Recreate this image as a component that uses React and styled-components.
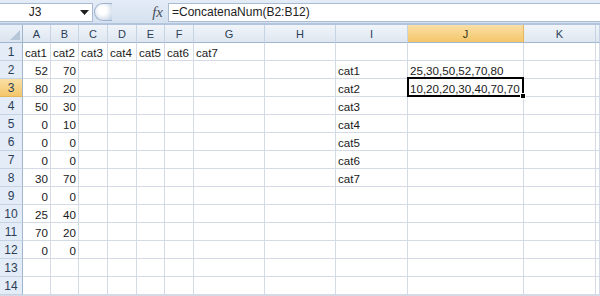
import React from "react";
import styled, { createGlobalStyle } from "styled-components";

const GlobalStyle = createGlobalStyle`
  html, body {
    margin: 0;
    padding: 0;
    background: #ffffff;
  }
  body {
    font-family: "Liberation Sans", Arial, sans-serif;
  }
`;

const columns = [
  { id: "A", width: 28 },
  { id: "B", width: 28 },
  { id: "C", width: 29 },
  { id: "D", width: 29 },
  { id: "E", width: 28 },
  { id: "F", width: 29 },
  { id: "G", width: 71 },
  { id: "H", width: 71 },
  { id: "I", width: 72 },
  { id: "J", width: 116 },
  { id: "K", width: 72 },
];

const numbers = [
  [52, 70],
  [80, 20],
  [50, 30],
  [0, 10],
  [0, 0],
  [0, 0],
  [30, 70],
  [0, 0],
  [25, 40],
  [70, 20],
  [0, 0],
];

const buildRows = () => {
  const rows = [];
  for (let r = 1; r <= 14; r++) {
    const cells = {};
    if (r === 1) {
      ["A", "B", "C", "D", "E", "F", "G"].forEach((c, i) => {
        cells[c] = { text: `cat${i + 1}` };
      });
    }
    if (r >= 2 && r <= 12) {
      cells.A = { text: String(numbers[r - 2][0]), num: true };
      cells.B = { text: String(numbers[r - 2][1]), num: true };
    }
    if (r >= 2 && r <= 8) {
      cells.I = { text: `cat${r - 1}` };
    }
    if (r === 2) cells.J = { text: "25,30,50,52,70,80" };
    if (r === 3) cells.J = { text: "10,20,20,30,40,70,70" };
    rows.push({ r, cells });
  }
  return rows;
};

const Page = styled.div`
  width: 600px;
  height: 296px;
  overflow: hidden;
  background: #d4dbe6;
`;

const FormulaBar = styled.div`
  display: flex;
  align-items: center;
  height: 22px;
  padding-top: 1px;
  background: linear-gradient(#e4ecf7, #d5e1f0);
  border-bottom: 2px solid #b3c5dc;
`;

const NameBox = styled.div`
  display: flex;
  align-items: center;
  width: 93px;
  height: 19px;
  box-sizing: border-box;
  background: #ffffff;
  border: 1px solid #a9bcd4;
  border-left: none;
  font-size: 12px;
  color: #222;
`;

const NameText = styled.span`
  flex: 1;
  text-align: center;
  padding-right: 10px;
`;

const Arrow = styled.svg`
  width: 9px;
  height: 5px;
  margin-right: 3px;
`;

const Splitter = styled.div`
  width: 18px;
  height: 18px;
  margin-left: 1px;
  box-sizing: border-box;
  border-radius: 9px 0 0 9px;
  border: 1px solid #9fb3cc;
  border-right: none;
  background: radial-gradient(circle at 45% 40%, #ffffff 30%, #c6d4e6 90%);
`;

const FxLabel = styled.span`
  width: 56px;
  text-align: right;
  padding-right: 5px;
  box-sizing: border-box;
  font-family: "Liberation Serif", "Times New Roman", serif;
  font-style: italic;
  font-size: 15px;
  color: #4a4f57;
`;

const FormulaInput = styled.div`
  flex: 1;
  height: 19px;
  box-sizing: border-box;
  background: #ffffff;
  border: 1px solid #a9bcd4;
  border-right: none;
  padding-left: 3px;
  font-size: 12px;
  line-height: 17px;
  color: #222;
  white-space: nowrap;
`;

const Grid = styled.div`
  display: grid;
  grid-template-columns: 23px ${columns.map((c) => `${c.width}px`).join(" ")} 1fr;
  grid-auto-rows: 18px;
  background: #ffffff;
`;

const Corner = styled.div`
  position: relative;
  box-sizing: border-box;
  background: linear-gradient(#eaf0f8, #dbe4ef);
  border-right: 1px solid #9eb6ce;
  border-bottom: 1px solid #9eb6ce;
  &::after {
    content: "";
    position: absolute;
    right: 2px;
    bottom: 2px;
    border-style: solid;
    border-width: 0 0 10px 10px;
    border-color: transparent transparent #b7c7da transparent;
  }
`;

const ColHeader = styled.div`
  box-sizing: border-box;
  display: flex;
  align-items: center;
  justify-content: center;
  font-size: 11px;
  color: ${(p) => (p.$active ? "#3a3522" : "#2c3e57")};
  background: ${(p) =>
    p.$active
      ? "linear-gradient(#fae0a6, #f4c66a)"
      : "linear-gradient(#f1f5fa, #dde6f0)"};
  border-right: 1px solid ${(p) => (p.$active ? "#e4b55b" : "#c5d3e3")};
  border-bottom: 1px solid #9eb6ce;
`;

const RowHeader = styled.div`
  box-sizing: border-box;
  display: flex;
  align-items: center;
  justify-content: center;
  font-size: 12px;
  color: #2c3e57;
  background: ${(p) =>
    p.$active ? "linear-gradient(#fae0a6, #f4c66a)" : "#e4ecf7"};
  border-right: 1px solid #9eb6ce;
  border-bottom: 1px solid ${(p) => (p.$active ? "#e4b55b" : "#c5d3e3")};
`;

const Cell = styled.div`
  position: relative;
  box-sizing: border-box;
  border-right: 1px solid #d4dbe6;
  border-bottom: 1px solid #d4dbe6;
  padding: 3px ${(p) => (p.$num ? "2px" : "0")} 0 ${(p) => (p.$num ? "0" : "2px")};
  font-size: 11.6px;
  line-height: 14px;
  color: #1a1a1a;
  text-align: ${(p) => (p.$num ? "right" : "left")};
  white-space: nowrap;

  ${(p) =>
    p.$selected &&
    `
    &::after {
      content: "";
      position: absolute;
      left: -1px;
      top: -2px;
      right: -1px;
      bottom: -1px;
      border: 2px solid #000;
      z-index: 2;
    }
    &::before {
      content: "";
      position: absolute;
      right: -3px;
      bottom: -3px;
      width: 4px;
      height: 4px;
      background: #000;
      border: 1px solid #fff;
      z-index: 3;
    }
  `}
`;

const rows = buildRows();

export default function App() {
  return (
    <Page>
      <GlobalStyle />
      <FormulaBar>
        <NameBox>
          <NameText>J3</NameText>
          <Arrow viewBox="0 0 9 5">
            <path d="M0 0h9L4.5 5z" fill="#1f1f1f" />
          </Arrow>
        </NameBox>
        <Splitter />
        <FxLabel>fx</FxLabel>
        <FormulaInput>=ConcatenaNum(B2:B12)</FormulaInput>
      </FormulaBar>
      <Grid>
        <Corner />
        {columns.map((c) => (
          <ColHeader key={c.id} $active={c.id === "J"}>
            {c.id}
          </ColHeader>
        ))}
        <ColHeader />
        {rows.map((row) => (
          <React.Fragment key={row.r}>
            <RowHeader $active={row.r === 3}>{row.r}</RowHeader>
            {columns.map((c) => {
              const cell = row.cells[c.id];
              return (
                <Cell
                  key={c.id}
                  $num={cell && cell.num}
                  $selected={row.r === 3 && c.id === "J"}
                >
                  {cell ? cell.text : ""}
                </Cell>
              );
            })}
            <Cell />
          </React.Fragment>
        ))}
      </Grid>
    </Page>
  );
}
